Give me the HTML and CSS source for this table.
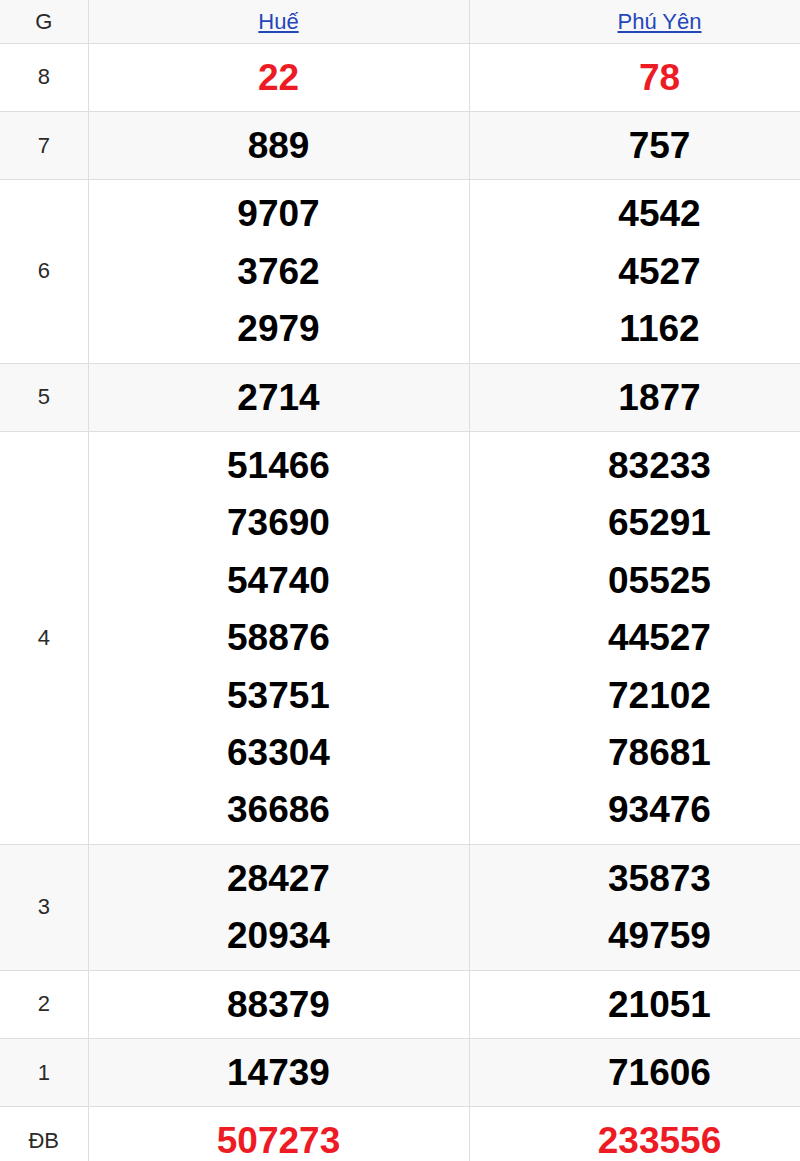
FILE: index.html
```html
<!DOCTYPE html>
<html lang="vi">
<head>
<meta charset="utf-8">
<title>Kết quả xổ số</title>
<link rel="stylesheet" href="styles.css">
</head>
<body>
<div class="board">
<table class="results">
  <colgroup><col class="c-prize"><col class="c-prov"><col class="c-prov"></colgroup>
  <thead>
    <tr class="alt">
      <th class="label">G</th>
      <th class="prov"><a href="#">Huế</a></th>
      <th class="prov"><a href="#">Phú Yên</a></th>
    </tr>
  </thead>
  <tbody>
    <tr>
      <td class="label">8</td>
      <td class="nums red"><div>22</div></td>
      <td class="nums red"><div>78</div></td>
    </tr>
    <tr class="alt">
      <td class="label">7</td>
      <td class="nums"><div>889</div></td>
      <td class="nums"><div>757</div></td>
    </tr>
    <tr>
      <td class="label">6</td>
      <td class="nums"><div>9707</div><div>3762</div><div>2979</div></td>
      <td class="nums"><div>4542</div><div>4527</div><div>1162</div></td>
    </tr>
    <tr class="alt">
      <td class="label">5</td>
      <td class="nums"><div>2714</div></td>
      <td class="nums"><div>1877</div></td>
    </tr>
    <tr>
      <td class="label">4</td>
      <td class="nums"><div>51466</div><div>73690</div><div>54740</div><div>58876</div><div>53751</div><div>63304</div><div>36686</div></td>
      <td class="nums"><div>83233</div><div>65291</div><div>05525</div><div>44527</div><div>72102</div><div>78681</div><div>93476</div></td>
    </tr>
    <tr class="alt">
      <td class="label">3</td>
      <td class="nums"><div>28427</div><div>20934</div></td>
      <td class="nums"><div>35873</div><div>49759</div></td>
    </tr>
    <tr>
      <td class="label">2</td>
      <td class="nums"><div>88379</div></td>
      <td class="nums"><div>21051</div></td>
    </tr>
    <tr class="alt">
      <td class="label">1</td>
      <td class="nums"><div>14739</div></td>
      <td class="nums"><div>71606</div></td>
    </tr>
    <tr>
      <td class="label">ĐB</td>
      <td class="nums red"><div>507273</div></td>
      <td class="nums red"><div>233556</div></td>
    </tr>
  </tbody>
</table>
</div>
</body>
</html>
```
FILE: styles.css
```css
html, body {
  margin: 0;
  padding: 0;
  background: #ffffff;
  overflow: hidden;
}

.board {
  width: 800px;
  overflow: hidden;
}

.results {
  width: 850px;
  table-layout: fixed;
  border-collapse: collapse;
  font-family: "Liberation Sans", Arial, sans-serif;
  color: #222;
}

.c-prize { width: 88px; }
.c-prov { width: 381px; }

.results th,
.results td {
  border: 1px solid #dedede;
  text-align: center;
  vertical-align: middle;
  padding: 0;
}

.results tr > :first-child { border-left: none; }
.results thead tr > * { border-top: none; }

.results th {
  font-weight: normal;
  font-size: 22px;
  line-height: 25px;
  height: 43px;
  box-sizing: border-box;
}

.alt { background: #f8f8f8; }

.results .label {
  font-size: 22px;
  color: #2a2a2a;
}

.prov a {
  color: #2447b8;
  text-decoration: underline;
  text-underline-offset: 2px;
}

.results td.nums {
  padding: 5px 0;
  font-size: 37px;
  font-weight: bold;
  color: #000;
}

.nums div {
  line-height: 57.4px;
}

.results td.nums.red { color: #ed1c24; }
```
